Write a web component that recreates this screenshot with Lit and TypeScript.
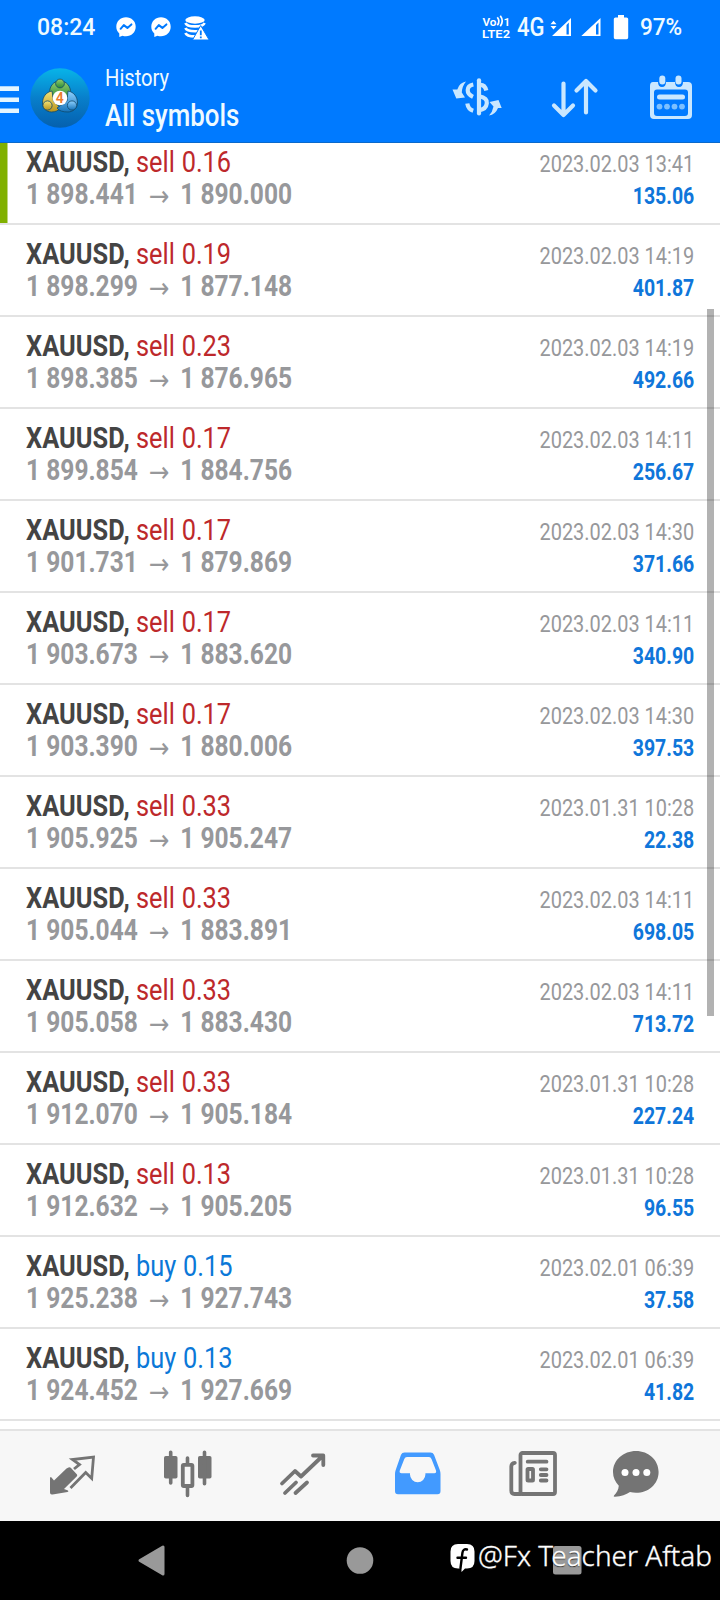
import { LitElement, html, svg, css } from "lit";
import { customElement, property } from "lit/decorators.js";

interface Deal {
  side: "sell" | "buy";
  volume: string;
  open: string;
  close: string;
  time: string;
  profit: string;
}

const deal = (side: "sell" | "buy", volume: string, open: string, close: string, time: string, profit: string): Deal => ({
  side, volume, open, close, time, profit,
});

const DEALS: Deal[] = [
  deal("sell", "0.16", "1 898.441", "1 890.000", "2023.02.03 13:41", "135.06"),
  deal("sell", "0.19", "1 898.299", "1 877.148", "2023.02.03 14:19", "401.87"),
  deal("sell", "0.23", "1 898.385", "1 876.965", "2023.02.03 14:19", "492.66"),
  deal("sell", "0.17", "1 899.854", "1 884.756", "2023.02.03 14:11", "256.67"),
  deal("sell", "0.17", "1 901.731", "1 879.869", "2023.02.03 14:30", "371.66"),
  deal("sell", "0.17", "1 903.673", "1 883.620", "2023.02.03 14:11", "340.90"),
  deal("sell", "0.17", "1 903.390", "1 880.006", "2023.02.03 14:30", "397.53"),
  deal("sell", "0.33", "1 905.925", "1 905.247", "2023.01.31 10:28", "22.38"),
  deal("sell", "0.33", "1 905.044", "1 883.891", "2023.02.03 14:11", "698.05"),
  deal("sell", "0.33", "1 905.058", "1 883.430", "2023.02.03 14:11", "713.72"),
  deal("sell", "0.33", "1 912.070", "1 905.184", "2023.01.31 10:28", "227.24"),
  deal("sell", "0.13", "1 912.632", "1 905.205", "2023.01.31 10:28", "96.55"),
  deal("buy", "0.15", "1 925.238", "1 927.743", "2023.02.01 06:39", "37.58"),
  deal("buy", "0.13", "1 924.452", "1 927.669", "2023.02.01 06:39", "41.82"),
];

const icon = (w: number, h: number, body: unknown) =>
  html`<svg width=${w} height=${h} viewBox="0 0 ${w} ${h}" fill="none">${body}</svg>`;

const messenger = icon(20, 21, svg`
  <path fill="#fff" d="M10 .3C4.500.3.3 4.300.3 9.700c0 2.800 1.100 5 3 6.700V20l3.200-1.300c1.100.4 2.200.5 3.500.5 5.500 0 9.700-4 9.700-9.500S15.500.3 10 .3Z"/>
  <path stroke="#007aff" stroke-width="2" stroke-linejoin="round" stroke-linecap="round" d="m4.600 11.800 3.200-3.700 3.600 2.800 4-3.500"/>`);

const database = icon(24, 24, svg`
  <ellipse cx="10" cy="4" rx="9.700" ry="3.700" fill="#fff"/>
  <path stroke="#fff" stroke-width="2.600" d="M.4 7c1 2.800 5 3.400 9.600 3.400S18.500 9.800 19.600 7M.4 12c1 2.600 4.600 3.300 9.600 3.300 2 0 3-.1 4-.4M.4 17c1 2.600 4.600 3.400 9.600 3.400"/>
  <path fill="#fff" stroke="#007aff" stroke-width="1" d="M15.700 9.500 24.200 24H7.500Z"/>
  <path stroke="#007aff" stroke-width="1.800" d="M15.800 14.500v4.700M15.800 20.500v1.800"/>`);

const volte = html`<svg width="28" height="24" viewBox="0 0 28 24" fill="none">
  <text class="mini" x="0.5" y="10.500" textLength="14" lengthAdjust="spacingAndGlyphs">Vo</text>
  <path stroke="#fff" stroke-width="1.700" d="M15.300 2.300c2 2.500 2 5.500 0 8M18.300.8c2.400 3.300 2.400 7.300 0 10.500"/>
  <text class="mini" x="21.500" y="10.500">1</text>
  <text class="mini" x="0" y="22.500" textLength="28" lengthAdjust="spacingAndGlyphs">LTE2</text>
</svg>`;

const signalArrows = icon(22, 19, svg`
  <path fill="#fff" d="m3.500 2.800 3 3.400h-6ZM3.500 11.500l3-3.400h-6Z"/>
  <path fill="#fff" fill-rule="evenodd" d="M21 0v18H2ZM18.800 4.500 16.500 7v9.500h2.300Z"/>`);
const signal = icon(20, 19, svg`
  <path fill="#fff" fill-rule="evenodd" d="M19.500 0v18H.3ZM17.500 4.500 15 7v9.500h2.500Z"/>`);
const battery = icon(16, 25, svg`<path fill="#fff" d="M5 0h6v2.500h2.500Q15.200 2.500 15.200 4v18.500q0 1.700-1.700 1.700h-11Q.8 24.200.8 22.500V4Q.8 2.500 2.500 2.500H5Z"/>`);

const menu = icon(19, 28, svg`<path stroke="#e4f5ff" stroke-width="4.600" d="M0 2.600h19M0 13.700h19M0 24.700h19"/>`);

const logo = html`<svg width="60" height="60" viewBox="0 0 60 60">
  <defs>
    <linearGradient id="sky" x2="0" y2="1"><stop stop-color="#08b4e8"/><stop offset=".5" stop-color="#087fcb"/><stop offset="1" stop-color="#0560ae"/></linearGradient>
    <linearGradient id="leaf" x2="0" y2="1"><stop stop-color="#98cf70"/><stop offset="1" stop-color="#278a35"/></linearGradient>
    <linearGradient id="gold" x2="0" y2="1"><stop stop-color="#f4e478"/><stop offset="1" stop-color="#b9941c"/></linearGradient>
    <linearGradient id="aqua" x2="0" y2="1"><stop stop-color="#8fd2ff"/><stop offset="1" stop-color="#1673ba"/></linearGradient>
  </defs>
  <circle cx="30" cy="30" r="29.700" fill="url(#sky)"/>
  <g stroke="#10496b" stroke-width=".8">
    <path fill="url(#leaf)" d="M19.500 25c0-7 4-12 10.500-12s10.700 5 10.700 12c0 3-1 5-2.500 6.500L30 24l-7 5Z"/>
    <path fill="url(#gold)" d="M22 23c-6 1-9.500 6-9.500 12 0 5.500 4 9 9 9 4 0 7-1.500 9-4l-7-7Z"/>
    <path fill="url(#aqua)" d="M38 23c6 1 9.500 6 9.500 12 0 5-4.500 9-9.500 9-5 0-9-1-11-4l10-7Z"/>
    <circle cx="30" cy="15.500" r="4.400" fill="url(#leaf)"/>
    <circle cx="17.500" cy="37.500" r="4.600" fill="url(#gold)"/>
    <circle cx="42" cy="37.500" r="4.600" fill="url(#aqua)"/>
  </g>
  <circle cx="30" cy="30" r="7.300" fill="#fff"/>
  <text class="four" x="29.800" y="35" text-anchor="middle">4</text>
</svg>`;

const dollar = icon(52, 42, svg`
  <g stroke="#c9e7ff" stroke-width="4.200">
    <path stroke-linecap="round" d="M27 3.300v33.200"/>
    <path d="M21.300 7.500C14 9 13.800 16.500 21 19.800M15.300 26.500c.6 3.800 2.600 6.300 5.900 7.300M27 8c4-.6 6.300 1.200 7.300 5.500M27 19.300c6 1 8.300 3 7.800 7-.4 3.800-3.200 6.400-7.800 7"/>
  </g>
  <path fill="#c9e7ff" d="M14 4.500Q7.500 5.500 5.300 12.500L.5 12.500 4.300 21.500 13 20.500 9.800 15.500Q10 9.500 14 4.500ZM37 38.500Q43.500 37.500 46 31L49.700 31 46.500 23 37.500 25 41.500 29.500Q40.500 35 37 38.500Z"/>`);

const sort = icon(48, 42, svg`
  <path stroke="#c9e7ff" stroke-width="4.200" stroke-linecap="round" stroke-linejoin="round"
    d="M12.500 6.500V37M3 28.500l9.500 9.500 9.500-9.500M35 35.500V5M25.500 13.500 35 4l9.500 9.500"/>`);

const calendar = icon(44, 46, svg`
  <path fill="#c9e7ff" fill-rule="evenodd" d="M4 7h5q0 5 4 5t4-5h9q0 5 4 5t4-5h5q4 0 4 4v29q0 4-4 4H5q-4 0-4-4V11q0-4 3-4ZM8 14.500q-3 0-3 3V38q0 3 3 3h28q3 0 3-3V17.500q0-3-3-3Z"/>
  <rect x="10.300" y=".5" width="6" height="9" rx="3" fill="#c9e7ff"/><rect x="26.500" y=".5" width="6" height="9" rx="3" fill="#c9e7ff"/>
  <path stroke="#c9e7ff" stroke-width="5" stroke-linecap="round" d="M10.500 22h23"/>
  <g fill="#7cc0ff"><circle cx="10.500" cy="31.600" r="2.900"/><circle cx="18" cy="31.600" r="2.900"/><circle cx="25.500" cy="31.600" r="2.900"/><circle cx="33" cy="31.600" r="2.900"/></g>`);

const quotes = icon(48, 48, svg`
  <path fill="#747474" d="M19.500 15.500Q21 15 22 16l6 6.500q.6 1-.3 2L15 37l4 1.500q1 1-.5 1.500L3.500 42.500Q1 43 1 40.500V26q.5-1.500 1.500-.6L5 28.500 17.500 16.600Z"/>
  <path stroke="#747474" stroke-width="2.800" d="m25 17 5.500-4.500L23.500 7.500 44.500 5l-1.800 21.500-6-6L21.500 36"/>`);
const chart = icon(50, 48, svg`
  <g fill="#747474"><rect x="1" y="6" width="13.500" height="22.500" rx="1.800"/><rect x="35" y="6" width="13.500" height="22.500" rx="1.800"/></g>
  <path stroke="#747474" stroke-width="3.600" stroke-linecap="round" d="M7.700 2.200v30.700M41.500 2.200v31.500M24.500 8v5M24.500 38v7.500"/>
  <rect x="19.800" y="14.800" width="9.600" height="21.200" rx="1" stroke="#747474" stroke-width="3.800"/>`);
const trade = icon(48, 48, svg`
  <path stroke="#747474" stroke-width="3.800" stroke-linecap="round" stroke-linejoin="round"
    d="M3 32.500 16 20l6 5.500L42.500 6M34 4.500h10.300v9.500M6 42l11-10.500M16.500 42 28 31.500"/>`);
const tray = icon(48, 48, svg`
  <path fill="#429aff" fill-rule="evenodd" d="M10.500 2.500h26q2.500 0 3.500 2.300L45.800 20q.7 2 .7 4v17q0 3.300-3 3.300H4Q1 44.300 1 41V24q0-2 .7-4L7 4.800Q8 2.500 10.500 2.500ZM13 7Q11 7 10.300 9L5.800 20.500Q5 23.300 7.500 23.300H16v1.200a7.700 7.700 0 0 0 15.400 0v-1.200h9Q42.700 23.300 42 20.500L37.500 9Q36.700 7 35 7Z"/>`);
const news = icon(50, 48, svg`
  <g stroke="#747474" stroke-width="3.800" stroke-linecap="round">
    <rect x="11.500" y="3" width="34.500" height="41" rx="2"/>
    <path d="M11.500 44H5.500Q2.300 44 2.300 40.500V16.500q0-3.200 3.500-3.700"/>
    <path d="M18.700 11.700h18.800M31.800 19.300h5.700M31.800 25h5.700M31.800 30.500h5.700"/>
    <rect x="18.500" y="19" width="5.500" height="11.500" rx=".6"/>
  </g>`);
const chat = icon(48, 48, svg`
  <path fill="#747474" d="M24 1C11.500 1 1 10 1 22c0 5.500 2.300 10 5.800 13.700C6.500 40 4.500 43 2 45.500q-1 1.300 1 1.200C9.500 46.500 14 44.500 18 42q3 .8 6 .8c12.500 0 22.600-8.800 22.600-20.800S36.500 1 24 1Z"/>
  <g fill="#fff"><circle cx="13" cy="22.500" r="3.500"/><circle cx="24" cy="22.500" r="3.500"/><circle cx="34.800" cy="22.500" r="3.500"/></g>`);

const back = icon(27, 31, svg`<path fill="#999" stroke="#999" stroke-width="3" stroke-linejoin="round" d="M2 15.500 25 2v27Z"/>`);
const home = icon(27, 27, svg`<circle cx="14" cy="13.500" r="13.300" fill="#999"/>`);
const recent = icon(29, 29, svg`<rect width="28.500" height="28.500" rx="2.500" fill="#999"/>`);
const badge = icon(25, 29, svg`
  <path fill="#fff" d="M8 0h9q7.500 0 7.500 7.500V17q0 7.500-7.500 7.500h-2L11.500 28v-3.500H8Q.5 24.500.5 17V7.500Q.5 0 8 0Z"/>
  <path stroke="#000" stroke-width="2.400" stroke-linecap="round" d="M17 5.500q-4-1-4.600 3.500L10.500 24M7.500 13.800h8.500"/>`);

@customElement("deal-row")
export class DealRow extends LitElement {
  @property({ attribute: false }) deal!: Deal;
  @property({ type: Boolean }) marked = false;

  static styles = css`
    :host { display: block; }
    .row {
      box-sizing: border-box;
      height: 92px;
      display: flex;
      justify-content: space-between;
      padding: 13px 26px 0;
      border-bottom: 2px solid #e3e3e3;
      line-height: 32px;
      font-size: 29px;
      white-space: nowrap;
    }
    .marked { box-shadow: inset 7.5px 0 #80b000; }
    .title, .prices { transform: scaleX(0.875); transform-origin: 0 0; width: 320px; }
    .symbol { font-weight: 700; color: #444; letter-spacing: 0.06px; }
    .side { word-spacing: 0.5px; }
    .sell { color: #bd282b; }
    .buy { color: #0b78d8; }
    .prices { display: flex; height: 32px; font-weight: 700; color: #97989b; transform: scaleX(0.847); }
    .arrow { width: 50px; text-align: center; font: 400 29px/36px "DejaVu Sans", sans-serif; }
    .meta { padding-top: 2px; font-size: 24px; text-align: right; }
    .time, .profit { transform: scaleX(0.831); transform-origin: 100% 0; }
    .time { color: #97989b; }
    .profit { color: #0f76da; font-weight: 700; transform: scaleX(0.812); }
  `;

  render() {
    const d = this.deal;
    return html`<div class="row ${this.marked ? "marked" : ""}">
      <div>
        <div class="title"><span class="symbol">XAUUSD,</span> <span class="side ${d.side}">${d.side} ${d.volume}</span></div>
        <div class="prices"><span>${d.open}</span><span class="arrow">→</span><span>${d.close}</span></div>
      </div>
      <div class="meta">
        <div class="time">${d.time}</div>
        <div class="profit">${d.profit}</div>
      </div>
    </div>`;
  }
}

@customElement("app-root")
export class AppRoot extends LitElement {
  static styles = css`
    :host {
      display: block;
      width: 720px;
      height: 1600px;
      overflow: hidden;
      position: relative;
      background: #fff;
      font-family: Roboto, sans-serif;
    }
    .screen { height: 1600px; display: flex; flex-direction: column; }
    svg { display: block; flex: none; overflow: visible; }
    header { height: 143px; flex: none; background: #007aff; color: #effaff; box-shadow: inset 0 -1px #0b69cb; white-space: nowrap; }
    .status { display: flex; align-items: center; height: 54px; padding: 0 38px 0 37px; font-size: 23px; font-weight: 500; }
    .clock { width: 79px; }
    .notes { display: flex; align-items: center; gap: 15px; flex: 1; }
    .notes svg:last-child { margin: 1px 0 0 -1px; }
    .network { width: 33px; font-size: 25px; }
    .network span { display: inline-block; transform: scaleX(0.88); transform-origin: 0 50%; }
    .volte { margin-right: 7px; }
    .sig2 { margin: 0 12px 0 9px; }
    .level { width: 42px; margin-left: 11px; }
    .level span { display: inline-block; transform: scaleX(0.98); transform-origin: 0 50%; }
    .mini { font: 600 11.800px Roboto, sans-serif; fill: #fff; }
    .four { font: 600 14px Roboto, sans-serif; fill: #ec7d2d; }
    .bar { display: flex; align-items: center; height: 88px; padding-right: 27px; }
    .menu { padding-top: 3px; }
    .logo { margin: 0 15px 0 11px; }
    .heading { flex: 1; padding-top: 1px; }
    .heading div { transform: scaleX(0.84); transform-origin: 0 0; }
    .sub { font-size: 24px; line-height: 34px; }
    .main { font-size: 31px; line-height: 42px; font-weight: 500; }
    .heading .main { transform: scaleX(0.834); }
    .actions { display: flex; align-items: center; gap: 47px; }
    .actions svg:last-child { margin-left: 3px; }
    .list { flex: 1; overflow: hidden; }
    .list deal-row:first-child { margin-top: -10px; }
    .scroll { position: absolute; left: 707px; top: 309px; width: 7px; height: 707px; background: rgba(0, 0, 0, 0.3); }
    nav { box-sizing: border-box; height: 92px; flex: none; display: grid; grid-template-columns: 114px 115.5px 115.5px 115px 103px 48px; align-items: start; padding: 19px 0 0 49px; border-top: 2px solid #e3e3e3; background: #f7f7f7; }
    nav svg:nth-child(1) { margin-top: 2px; }
    nav svg:nth-child(3) { margin-top: 1px; }
    footer { height: 79px; flex: none; display: flex; align-items: center; justify-content: space-between; padding: 0 138px; box-sizing: border-box; background: #000; }
    .mark { position: absolute; left: 450px; top: 1544px; display: flex; gap: 3px; color: #fff; font: 300 27.500px/28px "Noto Sans", sans-serif; white-space: nowrap; text-shadow: 0 1px 1px #222; -webkit-text-stroke: 0.3px #fff; }
    .mark span { transform: scaleX(1.016); transform-origin: 0 0; margin-top: -2px; }
  `;

  render() {
    return html`
      <div class="screen">
        <header>
          <div class="status">
            <div class="clock">08:24</div>
            <div class="notes">${messenger}${messenger}${database}</div>
            <div class="volte">${volte}</div>
            <div class="network"><span>4G</span></div>
            ${signalArrows}
            <div class="sig2">${signal}</div>
            ${battery}
            <div class="level"><span>97%</span></div>
          </div>
          <div class="bar">
            <div class="menu">${menu}</div>
            <div class="logo">${logo}</div>
            <div class="heading"><div class="sub">History</div><div class="main">All symbols</div></div>
            <div class="actions">${dollar}${sort}${calendar}</div>
          </div>
        </header>
        <div class="list">
          ${DEALS.map((d, i) => html`<deal-row .deal=${d} ?marked=${i === 0}></deal-row>`)}
        </div>
        <nav>${quotes}${chart}${trade}${tray}${news}${chat}</nav>
        <footer>${back}${home}${recent}</footer>
      </div>
      <div class="scroll"></div>
      <div class="mark">${badge}<span>@Fx Teacher Aftab</span></div>
    `;
  }
}
